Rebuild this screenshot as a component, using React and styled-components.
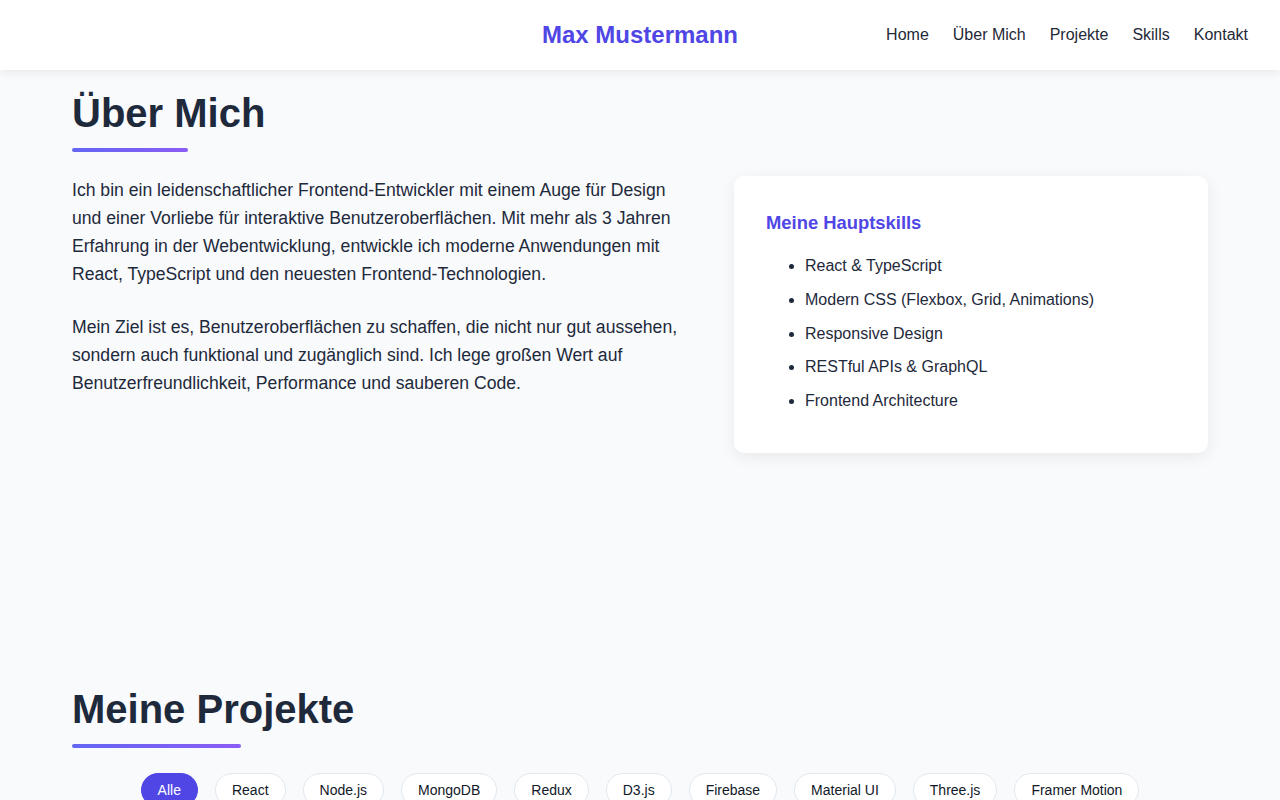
import React from 'react';
import styled, { createGlobalStyle } from "styled-components";

const GlobalStyle = createGlobalStyle`
  html, body {
    margin: 0;
    padding: 0;
    background: #f8fafc;
    color: #1e293b;
    font-family: "Liberation Sans", Arial, sans-serif;
    line-height: 1.6;
  }
  * {
    box-sizing: border-box;
  }
`;

const skills = [
  "React & TypeScript",
  "Modern CSS (Flexbox, Grid, Animations)",
  "Responsive Design",
  "RESTful APIs & GraphQL",
  "Frontend Architecture"
];

const filters = [
  "Alle", "React", "Node.js", "MongoDB", "Redux", "D3.js",
  "Firebase", "Material UI", "Three.js", "Framer Motion"
];

const Header = styled.header`
  position: sticky;
  top: 0;
  z-index: 10;
  height: 70px;
  background: #ffffff;
  box-shadow: 0 2px 10px rgba(0, 0, 0, 0.08);
`;

const HeaderInner = styled.div`
  height: 100%;
  padding: 0 32px;
  display: grid;
  grid-template-columns: 1fr auto 1fr;
  align-items: center;
`;

const Logo = styled.a`
  grid-column: 2;
  font-size: 24px;
  font-weight: 700;
  color: #4f46e5;
  text-decoration: none;
`;

const Nav = styled.nav`
  justify-self: end;
  display: flex;
  gap: 24px;
`;

const NavLink = styled.a`
  font-size: 16px;
  color: #1f2937;
  text-decoration: none;
`;

const Section = styled.section`
  max-width: 1200px;
  margin: 0 auto;
  padding: ${props => props.$top} 32px 0;
`;

const SectionTitle = styled.h2`
  width: fit-content;
  margin: 0 0 ${props => props.$gap};
  font-size: 40px;
  line-height: 1.2;
  font-weight: 700;
  color: #1e293b;

  &::after {
    content: "";
    display: block;
    width: 60%;
    height: 4px;
    margin-top: 11px;
    border-radius: 2px;
    background: linear-gradient(90deg, #6366f1, #8b5cf6);
  }
`;

const AboutGrid = styled.div`
  display: grid;
  grid-template-columns: 1fr 474px;
  gap: 48px;
  align-items: start;
`;

const AboutText = styled.div`
  p {
    margin: 0 0 24px;
    font-size: 17.6px;
    color: #1e293b;
  }
`;

const SkillCard = styled.div`
  padding: 32px;
  background: #ffffff;
  border-radius: 10px;
  box-shadow: 0 4px 16px rgba(0, 0, 0, 0.07);
`;

const CardTitle = styled.h3`
  margin: 0 0 16px;
  font-size: 18.4px;
  font-weight: 700;
  color: #4f46e5;
`;

const SkillList = styled.ul`
  margin: 0;
  padding-left: 39px;
`;

const SkillItem = styled.li`
  margin-bottom: 8px;
  font-size: 16px;
  color: #1e293b;
`;

const FilterRow = styled.div`
  display: flex;
  flex-wrap: wrap;
  justify-content: center;
  gap: 17px;
`;

const FilterButton = styled.button`
  padding: 8px 16px;
  border-radius: 999px;
  border: 1px solid ${props => (props.$active ? "#4f46e5" : "#e2e8f0")};
  background: ${props => (props.$active ? "#4f46e5" : "#ffffff")};
  color: ${props => (props.$active ? "#ffffff" : "#111827")};
  font-family: "Liberation Sans", Arial, sans-serif;
  font-size: 14px;
  line-height: normal;
  cursor: pointer;
`;

const App = () => {
  return (
    <>
      <GlobalStyle />
      <Header>
        <HeaderInner>
          <Logo href="#">Max Mustermann</Logo>
          <Nav>
            <NavLink href="#">Home</NavLink>
            <NavLink href="#">Über Mich</NavLink>
            <NavLink href="#">Projekte</NavLink>
            <NavLink href="#">Skills</NavLink>
            <NavLink href="#">Kontakt</NavLink>
          </Nav>
        </HeaderInner>
      </Header>

      <Section $top="19px">
        <SectionTitle $gap="24px">Über Mich</SectionTitle>
        <AboutGrid>
          <AboutText>
            <p>
              Ich bin ein leidenschaftlicher Frontend-Entwickler mit einem Auge für Design
              und einer Vorliebe für interaktive Benutzeroberflächen. Mit mehr als 3 Jahren
              Erfahrung in der Webentwicklung, entwickle ich moderne Anwendungen mit
              React, TypeScript und den neuesten Frontend-Technologien.
            </p>
            <p>
              Mein Ziel ist es, Benutzeroberflächen zu schaffen, die nicht nur gut aussehen,
              sondern auch funktional und zugänglich sind. Ich lege großen Wert auf
              Benutzerfreundlichkeit, Performance und sauberen Code.
            </p>
          </AboutText>
          <SkillCard>
            <CardTitle>Meine Hauptskills</CardTitle>
            <SkillList>
              {skills.map(skill => (
                <SkillItem key={skill}>{skill}</SkillItem>
              ))}
            </SkillList>
          </SkillCard>
        </AboutGrid>
      </Section>

      <Section $top="232px">
        <SectionTitle $gap="25px">Meine Projekte</SectionTitle>
        <FilterRow>
          {filters.map(filter => (
            <FilterButton key={filter} $active={filter === "Alle"}>
              {filter}
            </FilterButton>
          ))}
        </FilterRow>
      </Section>
    </>
  );
};

export default App;
